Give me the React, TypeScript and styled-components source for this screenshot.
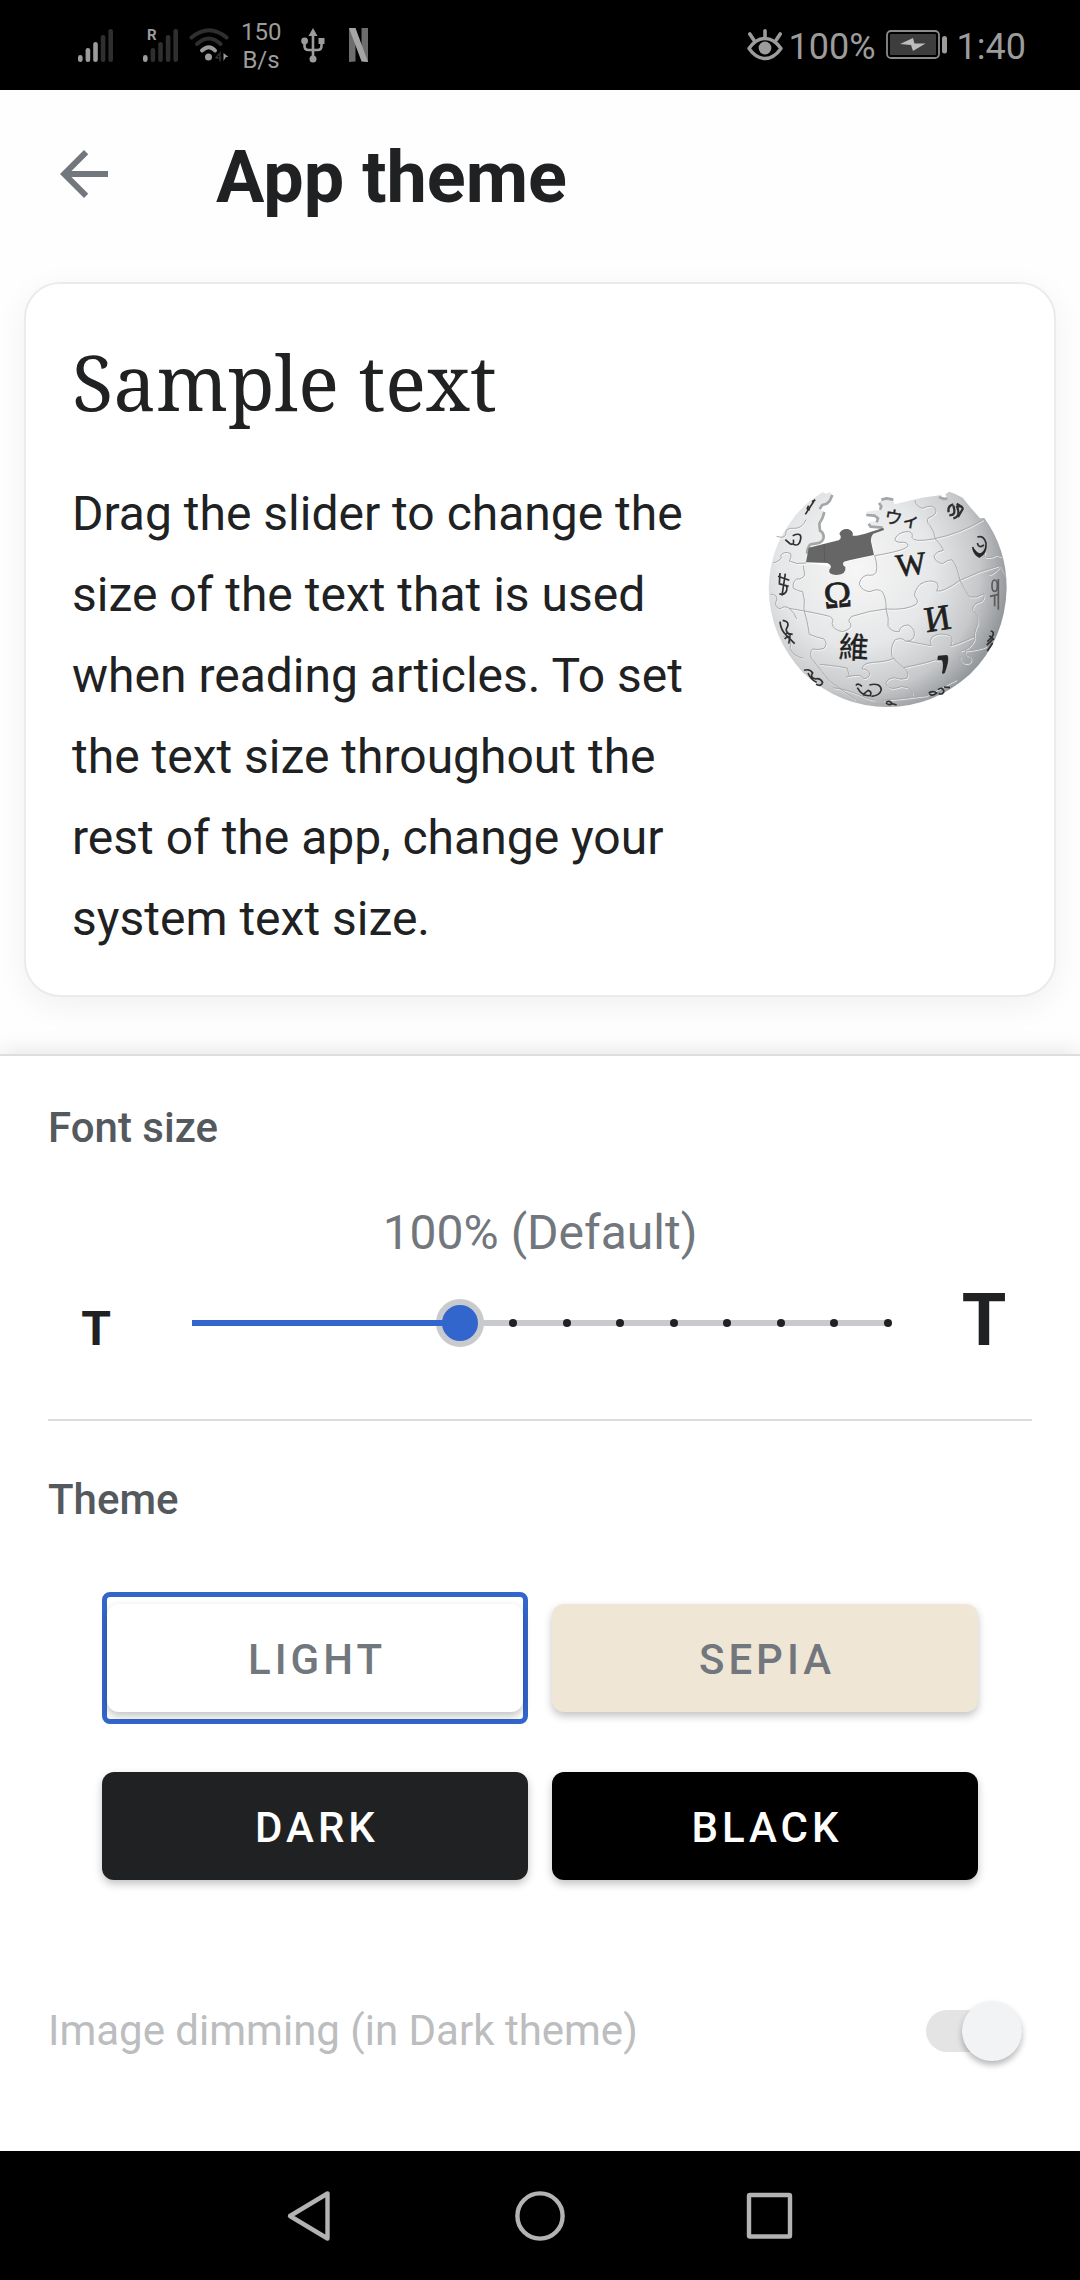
import React, { useState } from "react";
import styled, { createGlobalStyle } from "styled-components";

const color = {
  text: "#202122",
  label: "#54595d",
  muted: "#72777d",
  disabled: "#bcbdbe",
  accent: "#3366cc",
  track: "#c8cace",
  line: "#dddddd",
  status: "#9c9c9c",
  statusDim: "#2f2f2f",
  nav: "#b3b3b3",
};

const GlobalStyle = createGlobalStyle`
  *, *::before, *::after { box-sizing: border-box; }
  body { margin: 0; background: #fff; }
  h1, h2, p { margin: 0; font-weight: 400; }
  button, input { font: inherit; margin: 0; }
  svg { display: block; flex: none; }
`;

const Screen = styled.div`
  min-height: 100vh;
  display: flex;
  flex-direction: column;
  background: #fefefe;
  color: ${color.text};
  font-family: Roboto, "Liberation Sans", sans-serif;
`;

/* ---------- status bar ---------- */

const StatusBar = styled.div`
  height: 90px;
  padding: 0 54px 0 78px;
  display: flex;
  align-items: center;
  justify-content: space-between;
  background: #000;
  color: ${color.status};
`;

const StatusGroup = styled.div<{ $gap: number }>`
  display: flex;
  align-items: center;
  gap: ${(p) => p.$gap}px;
`;

const Speed = styled.span`
  width: 40px;
  margin: 0 10px 0 2px;
  padding-top: 2px;
  font-size: 24px;
  line-height: 28px;
  text-align: center;
`;

const StatusText = styled.span`
  padding-top: 4px;
  font-size: 36px;
  line-height: 42px;
`;

/* ---------- header ---------- */

const Header = styled.header`
  height: 168px;
  padding: 0 48px;
  display: flex;
  align-items: center;
  gap: 96px;
`;

const IconButton = styled.button`
  padding: 0;
  border: 0;
  background: none;
  color: ${color.muted};
  cursor: pointer;
`;

const Title = styled.h1`
  padding-top: 8px;
  font-size: 72px;
  line-height: 84px;
  font-weight: 700;
`;

/* ---------- sample card ---------- */

const Preview = styled.main`
  padding: 24px 24px 57px;
`;

const Card = styled.article`
  padding: 46px 46px 36px;
  border: 2px solid #ebebeb;
  border-radius: 36px;
  background: #fff;
  box-shadow: 0 8px 32px rgba(0, 0, 0, 0.06);
`;

const CardTitle = styled.h2`
  font-family: "Noto Serif", "DejaVu Serif Condensed", "Liberation Serif", serif;
  font-size: 76px;
  line-height: 104px;
`;

const CardBody = styled.div`
  margin-top: 39px;
  display: flex;
  justify-content: space-between;
  gap: 48px;
`;

const SampleText = styled.p`
  flex: 1;
  font-size: 48px;
  line-height: 81px;
`;

const Figure = styled.div`
  padding-top: 18px;
`;

/* ---------- settings panel ---------- */

const Panel = styled.section`
  flex: 1;
  padding: 48px 48px 0;
  border-top: 2px solid ${color.line};
  background: #fff;
  box-shadow: 0 0 24px rgba(0, 0, 0, 0.12);
`;

const SectionLabel = styled.h2`
  display: block;
  font-size: 42px;
  line-height: 48px;
  font-weight: 500;
  color: ${color.label};
`;

const SizeValue = styled.output`
  display: block;
  margin-top: 51px;
  font-size: 48px;
  line-height: 60px;
  text-align: center;
  color: ${color.muted};
`;

const SizeRow = styled.div`
  height: 120px;
  margin-bottom: 36px;
  display: grid;
  grid-template-columns: 96px 1fr 96px;
  gap: 24px;
  align-items: center;
`;

const Letter = styled.span<{ $large?: boolean }>`
  padding: ${(p) => (p.$large ? "0 0 4px" : "12px 0 0")};
  font-size: ${(p) => (p.$large ? 72 : 48)}px;
  line-height: 84px;
  font-weight: 700;
  text-align: center;
`;

const Slider = styled.div`
  display: grid;
  align-items: center;

  & > * {
    grid-area: 1 / 1;
  }
`;

const Rail = styled.div`
  height: 6px;
  margin: 0 24px;
  background: ${color.track};
`;

const Fill = styled.div`
  height: 6px;
  margin: 0 24px;
  pointer-events: none;
  z-index: 1;
`;

const FillBar = styled.div`
  height: 6px;
  background: ${color.accent};
`;

const Ticks = styled.div`
  margin: 0 20px;
  display: flex;
  justify-content: space-between;
  pointer-events: none;
`;

const Tick = styled.span<{ $on: boolean }>`
  width: 8px;
  height: 8px;
  border-radius: 50%;
  background: ${(p) => (p.$on ? color.text : "transparent")};
`;

const Range = styled.input`
  appearance: none;
  width: 100%;
  height: 48px;
  background: transparent;
  cursor: pointer;

  &::-webkit-slider-thumb {
    appearance: none;
    width: 48px;
    height: 48px;
    border: 6px solid ${color.track};
    border-radius: 50%;
    background: ${color.accent};
  }
`;

const Divider = styled.hr`
  margin: 0 0 55px;
  border: 0;
  border-top: 2px solid ${color.line};
`;

const ThemeGrid = styled.div`
  margin: 68px 54px 0;
  display: grid;
  grid-template-columns: 1fr 1fr;
  column-gap: 24px;
  row-gap: 36px;
`;

const ThemeSlot = styled.div<{ $selected: boolean }>`
  padding: 7px 0;
  border-style: solid;
  border-color: ${(p) => (p.$selected ? color.accent : "transparent")};
  border-width: ${(p) => (p.$selected ? "5px" : "5px 0")};
  border-radius: 8px;
`;

const ThemeButton = styled.button<{ $bg: string; $fg: string }>`
  display: block;
  width: 100%;
  height: 108px;
  padding: 4px 0 0 4px;
  border: 0;
  border-radius: 12px;
  background: ${(p) => p.$bg};
  color: ${(p) => p.$fg};
  font-size: 42px;
  line-height: 48px;
  font-weight: 500;
  letter-spacing: 4px;
  text-transform: uppercase;
  box-shadow: 0 4px 8px rgba(0, 0, 0, 0.24);
  cursor: pointer;
`;

const DimRow = styled.label`
  margin-top: 91px;
  height: 96px;
  padding-right: 10px;
  display: flex;
  align-items: center;
  justify-content: space-between;
  font-size: 42px;
  line-height: 48px;
  color: ${color.disabled};
`;

const Switch = styled.input`
  appearance: none;
  width: 96px;
  height: 60px;
  display: grid;
  align-items: center;

  &::before,
  &::after {
    content: "";
    grid-area: 1 / 1;
  }

  &::before {
    height: 42px;
    border-radius: 21px;
    background: #e4e4e4;
  }

  &::after {
    justify-self: end;
    width: 60px;
    height: 60px;
    border-radius: 50%;
    background: #f1f3f5;
    box-shadow: 0 4px 6px rgba(0, 0, 0, 0.28);
  }
`;

/* ---------- navigation bar ---------- */

const NavBar = styled.nav`
  height: 129px;
  display: flex;
  justify-content: center;
  background: #000;
`;

const NavButton = styled(IconButton)`
  width: 230px;
  height: 129px;
  display: grid;
  place-items: center;
  color: ${color.nav};
`;

/* ---------- drawings ---------- */

const Signal = ({ strength, roaming }: { strength: number; roaming?: boolean }) => (
  <svg width="36" height="46" viewBox="0 -6 36 46">
    {[7, 14, 20, 27, 33].map((h, i) => (
      <rect
        key={h}
        x={i * 7.6}
        y={34 - h}
        width="4.6"
        height={h}
        rx="2.3"
        fill={i < strength ? color.status : color.statusDim}
      />
    ))}
    {roaming && (
      <text x="4" y="12" fontFamily="Roboto" fontWeight="700" fontSize="15" fill={color.status}>
        R
      </text>
    )}
  </svg>
);

const WifiIcon = () => (
  <svg width="40" height="34" viewBox="0 0 40 34" fill="none" strokeLinecap="round" strokeWidth="4">
    <path d="M2.5 9.5Q20-5 37.500 9.5" stroke={color.statusDim} />
    <path d="M8 16Q20 5 31.500 16" stroke={color.statusDim} />
    <path d="M13 22.500Q20 16 26 22.500" stroke={color.status} />
    <circle cx="19.500" cy="29" r="3.500" fill={color.status} />
    <path d="M27 29.500L31 25v8M27 30h5" stroke={color.statusDim} strokeWidth="1.500" />
    <path d="M34.500 25l5 4h-2.500l-2.500 4z" fill={color.status} />
  </svg>
);

const UsbIcon = () => (
  <svg width="24" height="35" viewBox="0 0 24 35" fill="none" stroke={color.status} strokeWidth="2.6">
    <path d="M12 5v24M3.500 14v4q0 4 4 4h9q4 0 4-4v-4" />
    <path d="M12 0l4.500 8h-9z" fill={color.status} stroke="none" />
    <circle cx="12" cy="31" r="3.500" fill={color.status} stroke="none" />
    <circle cx="3.600" cy="13" r="3.400" fill={color.status} stroke="none" />
    <path d="M17.500 10h6v6h-6z" fill={color.status} stroke="none" />
  </svg>
);

const StreamIcon = () => (
  <svg width="19" height="34" viewBox="0 0 19 34">
    <path d="M0 0h6.500v33.500L0 34zM12.500 0H19v34l-6.500-.5z" fill="#6d6d6d" />
    <path d="M0 0h6.500L19 34l-6.500-.7z" fill="#a6a6a6" />
  </svg>
);

const EyeIcon = () => (
  <svg width="36" height="32" viewBox="0 0 36 32" fill="none" stroke={color.status} strokeLinecap="round">
    <path d="M2 19.500Q9 9.500 18 9.500T34 19.500Q27 29.500 18 29.500T2 19.500z" strokeWidth="3.400" strokeLinejoin="round" />
    <path d="M18 1.800v6M2.800 5l4 6M33.200 5l-4 6" strokeWidth="3.600" />
    <circle cx="18" cy="19" r="6.400" fill={color.status} stroke="none" />
  </svg>
);

const BatteryIcon = () => (
  <svg width="61" height="30" viewBox="0 0 61 30">
    <rect x="1" y="1" width="52" height="27" rx="4" fill="none" stroke="#8a8a8a" strokeWidth="1.800" />
    <rect x="4" y="4" width="46" height="21" rx="1" fill="#3d3d3d" />
    <path d="M14 14l13-6 1.500 5.500H39.500L27 21l-2-6z" fill="#bdbdbd" />
    <rect x="56" y="6" width="5" height="17.500" rx="2.500" fill={color.status} />
  </svg>
);

const ArrowBack = () => (
  <svg width="72" height="72" viewBox="0 0 24 24" fill="currentColor">
    <path d="M20 11H7.830l5.590-5.590L12 4l-8 8 8 8 1.410-1.410L7.830 13H20v-2z" />
  </svg>
);

const NavIcon = ({ shape }: { shape: string }) => (
  <svg width="50" height="52" viewBox="0 0 50 52" fill="none" stroke="currentColor" strokeWidth="4.400" strokeLinejoin="round">
    {shape === "back" && <path d="M5 26L42.500 3.500v45z" />}
    {shape === "home" && <circle cx="25" cy="26" r="22.600" />}
    {shape === "recent" && <rect x="4" y="5" width="41" height="41.500" rx="1" />}
  </svg>
);

const seams = [
  "M404 288Q500 272 504 258Q504 246 480 248Q458 246 468 232Q482 214 508 216Q520 220 516 234Q520 248 580 238Q660 222 730 180",
  "M404 288Q414 320 408 338Q400 350 382 346Q360 352 358 374Q366 394 390 396Q416 384 428 398Q440 420 438 448",
  "M148 446Q240 462 268 470Q284 478 276 492Q280 512 308 516Q338 508 332 492Q320 482 336 470Q390 452 438 448Q500 452 528 434Q538 424 524 410Q522 394 540 374Q570 356 592 370Q598 384 590 394Q610 398 660 362Q720 332 780 318",
  "M438 448Q448 476 444 500Q456 518 478 516Q480 496 506 496Q528 510 522 532Q512 548 496 544Q486 532 466 540Q450 560 456 590Q466 604 490 624Q512 640 500 656Q480 662 464 654Q440 656 438 672Q444 688 464 686Q484 676 504 684Q520 696 520 712",
  "M190 318L194 346Q186 360 170 358Q156 368 160 386Q172 394 188 396Q196 420 192 450Q204 490 208 524Q232 534 252 538Q264 552 252 566Q234 572 218 568Q208 576 214 596L268 664",
  "M148 446Q164 460 170 478M240 614Q300 620 322 626L328 650M318 652Q360 642 366 652Q374 664 390 646Q386 628 366 628Q368 610 400 608Q440 606 462 596",
  "M525 122Q528 142 548 146Q580 130 588 152Q588 168 566 174Q556 184 570 198Q584 218 586 238",
  "M586 238Q608 262 610 272Q590 274 582 288Q584 308 608 312Q622 300 636 300Q652 320 660 362Q674 392 688 412Q712 416 732 402Q736 424 716 428Q698 434 698 452Q716 468 714 492Q700 520 704 540Q690 570 662 574",
  "M500 544Q560 556 574 558Q566 542 576 532Q600 516 630 528Q642 540 632 558Q648 556 704 530",
  "M490 624Q560 610 586 600L600 604M660 590Q660 612 684 612Q700 606 690 590Q676 588 676 574Q720 570 740 560",
  "M730 262Q740 278 732 290Q744 300 770 286L784 292M780 318Q788 340 798 350M744 342Q752 352 780 322",
  "M100 310Q130 300 122 288Q132 272 152 282Q156 292 148 304Q170 316 198 310M92 404Q112 404 110 420Q100 440 120 448Q134 436 148 446",
  "M110 230Q140 240 138 216Q142 204 160 206Q186 208 198 180M130 530Q160 540 150 566Q160 590 190 596",
  "M268 664L346 720M280 684Q330 690 380 716L404 722M430 722Q500 716 560 708Q590 690 650 660",
];

const glyphs: { t: string; x: number; y: number; s: number; r: number; f?: string }[] = [
  { t: "Ω", x: 296, y: 443, s: 112, r: -5 },
  { t: "W", x: 517, y: 346, s: 96, r: -7 },
  { t: "И", x: 598, y: 512, s: 108, r: -9 },
  { t: "維", x: 340, y: 596, s: 90, r: 3, f: "Noto Sans CJK TC" },
  { t: "ウィ", x: 484, y: 197, s: 54, r: 10, f: "Noto Sans CJK JP" },
];

const strokes = [
  "M712 232Q732 226 738 250Q740 280 718 292Q702 284 698 262",
  "M712 250Q716 268 732 256",
  "M594 596Q606 588 622 592Q624 606 612 640",
  "M114 350L148 362M116 372L146 380M120 340L118 372M136 342L126 408M130 376Q144 376 140 392Q134 408 118 402",
  "M120 486Q122 512 140 528L164 552M128 482Q152 486 140 506Q134 514 152 528M138 520L158 524M134 538Q142 528 150 532L146 552",
  "M136 240L150 252Q164 258 160 240M158 228Q186 216 182 238Q178 262 160 254",
  "M196 164L222 124M206 138Q196 152 210 150M216 126L226 120",
  "M192 632Q210 626 218 640Q208 652 226 658Q240 654 248 668Q244 682 228 674M204 640Q212 660 230 668",
  "M348 678Q352 668 366 680M352 684Q366 710 390 708Q398 696 384 692Q372 700 370 708M388 676Q420 668 424 690Q420 708 394 710",
  "M566 700Q580 692 590 700Q580 710 568 704M594 690Q606 680 612 694M612 682L630 684M596 702Q610 706 612 694",
  "M752 514Q766 516 756 532L742 546M760 536Q752 548 740 556M758 550L742 574M748 528L762 540",
  "M438 728Q450 720 456 732Q446 738 438 730M458 732L470 736",
];

const Globe = () => (
  <svg width="240" height="217" viewBox="84 94 720 651" role="img" aria-label="Puzzle globe">
    <defs>
      <radialGradient id="sphere" gradientUnits="userSpaceOnUse" cx="350" cy="330" r="460">
        <stop offset="0" stopColor="#f6f6f6" />
        <stop offset="0.5" stopColor="#e6e7e8" />
        <stop offset="0.8" stopColor="#c6c8ca" />
        <stop offset="1" stopColor="#94979a" />
      </radialGradient>
    </defs>
    <path
      d="M248 98L258 102L270 98L277 106L269 124L260 132L247 136L239 148L253 157L248 174L238 192L240 213Q251 218 251 233Q249 249 230 251L212 254Q202 262 201 282L200 310L268 320L312 308L404 288L394 240L400 220L430 212L428 204L392 201L386 192L396 184L410 188L414 176L404 168L379 166L379 156L420 150L424 140L417 130L424 120L440 116L460 120L463 134L545 114L606 106L597 112L612 118L622 116L616 104L628 96L644 102L668 114L692 144L720 176L733 175Q800 268 800 385Q796 540 690 644Q580 742 443 742Q300 742 190 640Q88 530 86 385Q90 270 150 190Q180 140 248 98z"
      fill="url(#sphere)"
    />
    <path
      d="M253 157L248 174L238 192L240 213Q251 218 251 233Q249 249 230 251L212 254Q202 262 201 282M277 106L269 124L260 132L247 136L239 148M379 166L404 168L414 176L410 188M386 192L392 201L428 204M417 130L424 140L420 150M424 120L440 116L460 120M597 112L612 118L622 116"
      fill="none"
      stroke="#a4a6a8"
      strokeWidth="8"
      strokeLinejoin="round"
    />
    <path
      d="M206 264L296 242Q308 234 298 222Q304 206 324 208Q342 214 338 228Q350 232 430 204L432 211L400 222Q390 234 394 250L402 286Q340 298 312 306Q304 314 316 322Q320 344 290 346Q264 344 268 330Q280 318 262 310L198 308z"
      fill="#666"
    />
    <path d="M252 254l2 50" stroke="#555" strokeWidth="2" />
    <g fill="none" stroke="#fff" strokeWidth="3" transform="translate(2 3)" opacity="0.7">
      {seams.map((d) => (
        <path key={d} d={d} />
      ))}
    </g>
    <g fill="none" stroke="#a3a5a7" strokeWidth="2.800">
      {seams.map((d) => (
        <path key={d} d={d} />
      ))}
    </g>
    <g fill="#202020" textAnchor="middle">
      {glyphs.map((g) => (
        <text
          key={g.t}
          transform={`translate(${g.x} ${g.y}) rotate(${g.r})`}
          fontSize={g.s}
          fontFamily={g.f ? `"${g.f}", sans-serif` : '"Liberation Serif", serif'}
          stroke="#202020"
          strokeWidth={g.f ? 1 : 2}
        >
          {g.t}
        </text>
      ))}
    </g>
    <g fill="none" stroke="#303030" strokeWidth="5">
      {strokes.map((d) => (
        <path key={d} d={d} />
      ))}
    </g>
    <path d="M698 262Q704 286 720 292Q738 284 739 256L734 268Q724 286 712 278zM594 588L622 586Q628 606 610 644L606 640Q612 612 606 602L592 600z" fill="#262626" />
    <g fill="none" stroke="#5a5a5a" strokeWidth="5">
      <ellipse cx="764" cy="378" rx="8" ry="17" />
      <path d="M750 410L776 404M764 408V440M775 358V450" />
    </g>
    <g fill="none" stroke="#303030" strokeWidth="7">
      <path d="M626 158Q622 138 640 134M628 166Q650 170 640 138M640 176Q664 172 650 138M654 172L668 148Q668 138 654 140M650 132L666 142" />
    </g>
  </svg>
);

/* ---------- screen ---------- */

const MIN = -5;
const MAX = 8;
const steps = Array.from({ length: MAX - MIN + 1 }, (_, i) => MIN + i);

const themes = [
  { name: "Light", bg: "#ffffff", fg: color.muted },
  { name: "Sepia", bg: "#f0e6d6", fg: color.muted },
  { name: "Dark", bg: "#202122", fg: "#ffffff" },
  { name: "Black", bg: "#000000", fg: "#ffffff" },
];

export default function App() {
  const [size, setSize] = useState(0);
  const [theme, setTheme] = useState("Light");
  const percent = 100 + size * 10;

  return (
    <>
      <GlobalStyle />
      <Screen>
        <StatusBar>
          <StatusGroup $gap={10}>
            <StatusGroup $gap={29}>
              <Signal strength={3} />
              <Signal strength={1} roaming />
            </StatusGroup>
            <WifiIcon />
            <Speed>150 B/s</Speed>
            <StatusGroup $gap={24}>
              <UsbIcon />
              <StreamIcon />
            </StatusGroup>
          </StatusGroup>
          <StatusGroup $gap={10}>
            <StatusGroup $gap={6}>
              <EyeIcon />
              <StatusText>100%</StatusText>
            </StatusGroup>
            <BatteryIcon />
            <StatusText>1:40</StatusText>
          </StatusGroup>
        </StatusBar>

        <Header>
          <IconButton type="button" aria-label="Back">
            <ArrowBack />
          </IconButton>
          <Title>App theme</Title>
        </Header>

        <Preview>
          <Card>
            <CardTitle>Sample text</CardTitle>
            <CardBody>
              <SampleText>
                Drag the slider to change the size of the text that is used when reading articles. To set the text size
                throughout the rest of the app, change your system text size.
              </SampleText>
              <Figure>
                <Globe />
              </Figure>
            </CardBody>
          </Card>
        </Preview>

        <Panel>
          <SectionLabel as="label" htmlFor="font-size">
            Font size
          </SectionLabel>
          <SizeValue htmlFor="font-size">
            {percent}%{size === 0 ? " (Default)" : ""}
          </SizeValue>
          <SizeRow>
            <Letter>T</Letter>
            <Slider>
              <Rail />
              <Ticks>
                {steps.map((s) => (
                  <Tick key={s} $on={s > size} />
                ))}
              </Ticks>
              <Range
                id="font-size"
                type="range"
                min={MIN}
                max={MAX}
                value={size}
                onChange={(e) => setSize(Number(e.target.value))}
              />
              <Fill>
                <FillBar style={{ width: `${((size - MIN) / (MAX - MIN)) * 100}%` }} />
              </Fill>
            </Slider>
            <Letter $large>T</Letter>
          </SizeRow>
          <Divider />
          <SectionLabel>Theme</SectionLabel>
          <ThemeGrid>
            {themes.map((t) => (
              <ThemeSlot key={t.name} $selected={t.name === theme}>
                <ThemeButton
                  type="button"
                  $bg={t.bg}
                  $fg={t.fg}
                  aria-pressed={t.name === theme}
                  onClick={() => setTheme(t.name)}
                >
                  {t.name}
                </ThemeButton>
              </ThemeSlot>
            ))}
          </ThemeGrid>
          <DimRow htmlFor="dimming">
            Image dimming (in Dark theme)
            <Switch id="dimming" type="checkbox" role="switch" defaultChecked disabled />
          </DimRow>
        </Panel>

        <NavBar>
          <NavButton type="button" aria-label="Back">
            <NavIcon shape="back" />
          </NavButton>
          <NavButton type="button" aria-label="Home">
            <NavIcon shape="home" />
          </NavButton>
          <NavButton type="button" aria-label="Recent apps">
            <NavIcon shape="recent" />
          </NavButton>
        </NavBar>
      </Screen>
    </>
  );
}
